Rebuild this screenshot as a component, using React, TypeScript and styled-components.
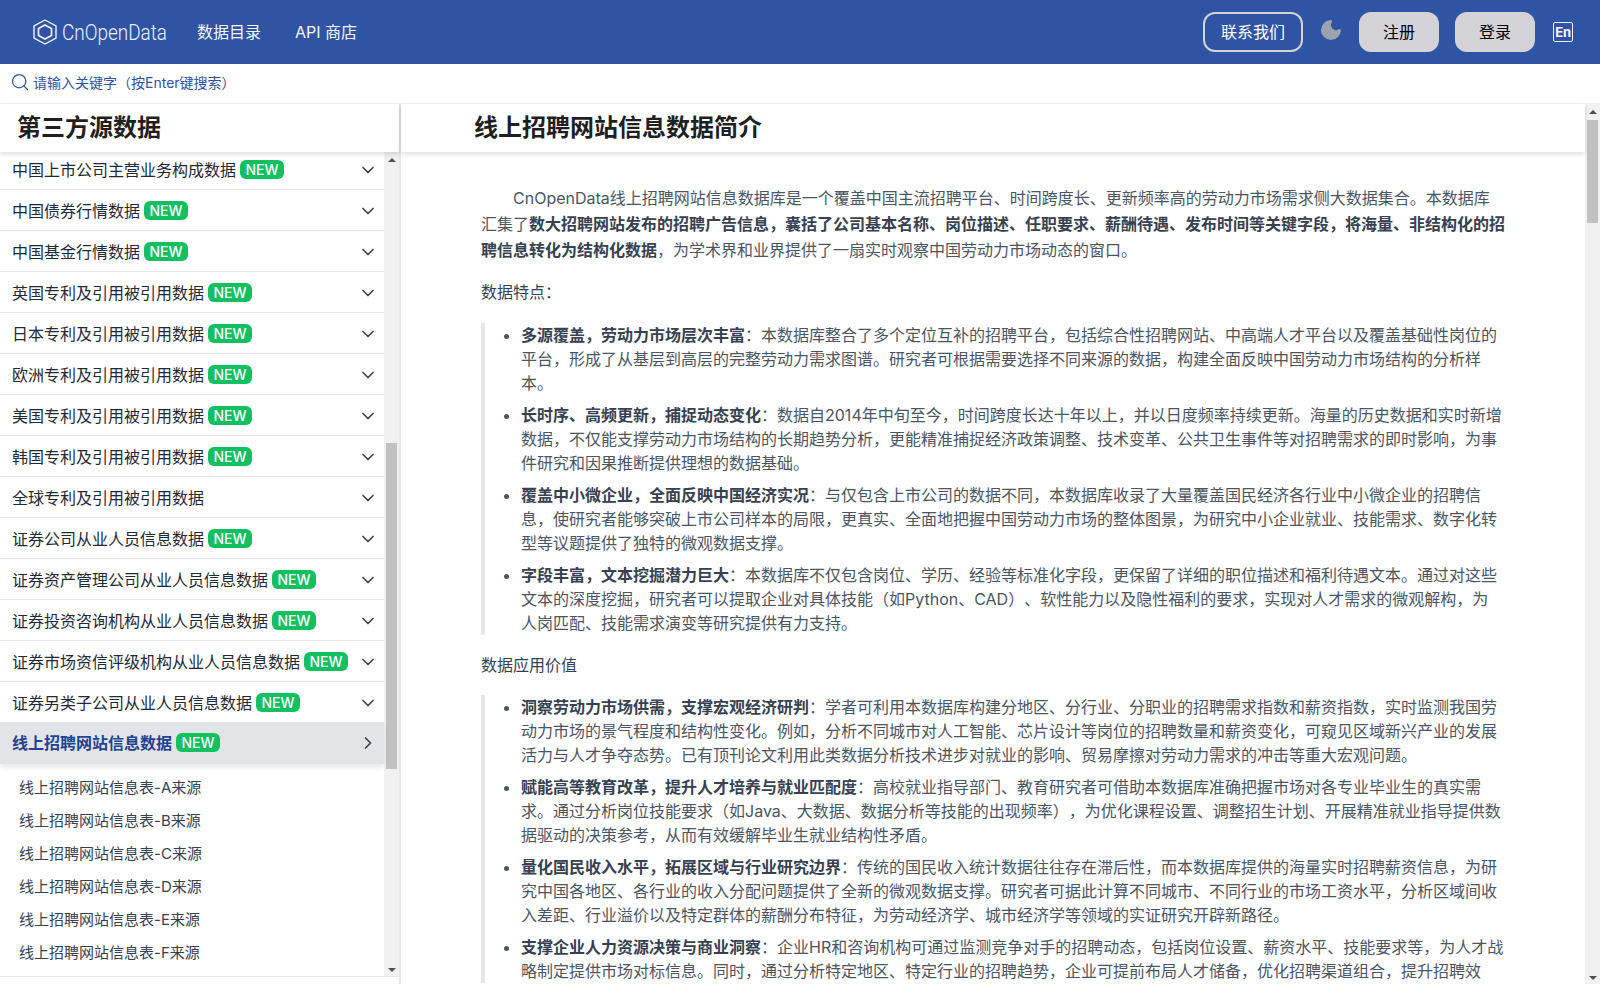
import React from 'react'
import styled, { createGlobalStyle } from 'styled-components'
import { ChevronDown, ChevronRight, Moon, Search } from 'lucide-react'

const GlobalStyle = createGlobalStyle`
  html, body {
    margin: 0;
    padding: 0;
    background: #fff;
    overflow: hidden;
    font-family: Inter, "Noto Sans CJK SC", sans-serif;
    text-spacing-trim: space-all;
  }
  * { box-sizing: border-box; }
`

const Page = styled.div`
  display: flex;
  flex-direction: column;
  height: 984px;
`

const Header = styled.header`
  display: flex;
  align-items: center;
  height: 64px;
  flex: none;
  padding: 0 27px 0 33px;
  background: #2e54a3;
  color: #fff;
`

const Logo = styled.div`
  display: flex;
  align-items: center;
  gap: 5px;
  width: 164px;
  color: #eef1f8;
`

const LogoText = styled.span`
  display: inline-block;
  font-family: Roboto, sans-serif;
  font-size: 22px;
  font-weight: 300;
  white-space: nowrap;
  transform: scaleX(0.86);
  transform-origin: left center;
`

const NavLink = styled.a`
  font-size: 16px;
  margin-right: 34px;
  padding-bottom: 2px;
  color: #f4f6fb;
`

const HeaderRight = styled.div`
  display: flex;
  align-items: center;
  margin-left: auto;
`

const ContactButton = styled.button`
  width: 100px;
  height: 40px;
  padding: 0 0 2px;
  border: 2px solid #d4d4d8;
  border-radius: 12px;
  background: transparent;
  color: #fff;
  font: inherit;
  font-size: 16px;
  margin-right: 16px;
`

const AuthButton = styled.button`
  width: 80px;
  height: 40px;
  padding: 0 0 2px;
  border: 0;
  border-radius: 12px;
  background: #d4d4d8;
  color: #000;
  font: inherit;
  font-size: 16px;
  margin-left: 16px;
`

const MoonIcon = styled(Moon)`
  color: #9ca3af;
  fill: #9ca3af;
  margin-top: -4px;
`

const LangBadge = styled.span`
  display: flex;
  align-items: center;
  justify-content: center;
  width: 20px;
  height: 20px;
  margin-left: 18px;
  border: 1.5px solid #f1f4fa;
  border-radius: 2px;
  font-size: 13px;
  font-weight: 700;
  letter-spacing: -0.2px;
`

const SearchBar = styled.div`
  display: flex;
  align-items: center;
  gap: 3px;
  flex: none;
  height: 40px;
  padding: 0 0 3px 10px;
  font-size: 14px;
  color: #2e54a3;
  border-bottom: 1px solid #f1f1f2;
`

const Main = styled.div`
  display: flex;
  flex: 1;
  min-height: 0;
`

const Sidebar = styled.aside`
  display: flex;
  flex-direction: column;
  flex: none;
  width: 401px;
  border-right: 2px solid #e5e7eb;
`

const TitleBar = styled.div<{ $indent: number }>`
  position: relative;
  z-index: 2;
  flex: none;
  height: 48px;
  padding-left: ${p => p.$indent}px;
  font-size: 24px;
  font-weight: 700;
  line-height: 47px;
  color: #1f1f1f;
  background: #fff;
  box-shadow: 0 2px 5px rgba(0, 0, 0, 0.14);
`

const SidebarBody = styled.div`
  display: flex;
  height: 825px;
  flex: none;
  border-bottom: 1px solid #e5e7eb;
  overflow: hidden;
`

const MenuList = styled.div`
  flex: 1;
  min-width: 0;
  margin-top: -3px;
`

const MenuRow = styled.div<{ $active?: boolean }>`
  position: relative;
  display: flex;
  align-items: center;
  height: 41px;
  padding: 0 6px ${p => (p.$active ? '3px' : '0')} 12px;
  font-size: 16px;
  color: ${p => (p.$active ? '#1e4391' : '#1f2937')};
  font-weight: ${p => (p.$active ? 700 : 400)};
  background: ${p => (p.$active ? '#e3e4e7' : 'transparent')};
  border-bottom: ${p => (p.$active ? '0' : '1px solid #e5e7eb')};
  box-shadow: ${p => (p.$active ? '0 3px 6px rgba(0, 0, 0, 0.1)' : 'none')};
`

const NewBadge = styled.span`
  flex: none;
  width: 44px;
  height: 19px;
  margin-left: 4px;
  border-radius: 6px;
  background: #12c05f;
  color: #fff;
  font-size: 14px;
  font-weight: 500;
  line-height: 19px;
  text-align: center;
`

const RowIcon = styled.span`
  display: flex;
  margin-left: auto;
  margin-top: 2px;
  color: #374151;
`

const SubList = styled.div`
  padding: 7px 0 8px 19px;
`

const SubItem = styled.div`
  height: 33px;
  font-size: 15px;
  line-height: 33px;
  color: #374151;
`

const ScrollTrack = styled.div<{ $width: number }>`
  display: flex;
  flex-direction: column;
  align-items: center;
  justify-content: space-between;
  flex: none;
  width: ${p => p.$width}px;
  background: #f1f1f1;
`

const ArrowUp = styled.span`
  flex: none;
  margin: 6px 0;
  border-left: 4px solid transparent;
  border-right: 4px solid transparent;
  border-bottom: 4px solid #505050;
`

const ArrowDown = styled.span`
  flex: none;
  margin: 6px 0 4px;
  border-left: 4px solid transparent;
  border-right: 4px solid transparent;
  border-top: 4px solid #505050;
`

const ScrollArea = styled.div`
  flex: 1;
  width: 100%;
  display: flex;
  justify-content: center;
`

const ScrollThumb = styled.div<{ $top: number; $height: number }>`
  width: 11px;
  height: ${p => p.$height}px;
  margin-top: ${p => p.$top}px;
  background: #c1c1c1;
`

const ContentPanel = styled.main`
  display: flex;
  flex: 1;
  min-width: 0;
`

const ContentColumn = styled.div`
  display: flex;
  flex-direction: column;
  flex: 1;
  min-width: 0;
`

const Article = styled.article`
  flex: 1;
  min-height: 0;
  overflow: hidden;
  padding: 33px 79px 0 80px;
  font-size: 16px;
  color: #4b5563;
`

const Lead = styled.p`
  margin: 0 0 16px;
  line-height: 26px;
  text-indent: 2em;
  strong { color: #374151; }
`

const Section = styled.p`
  margin: 0 0 17.5px;
  line-height: 26px;
  color: #374151;
`

const Quote = styled.blockquote`
  margin: 0 0 17px;
  padding-left: 16px;
  border-left: 4px solid #e5e7eb;
`

const BulletList = styled.ul`
  margin: 0;
  padding: 0 0 0 20px;
`

const Bullet = styled.li`
  margin-bottom: 8px;
  line-height: 24px;
  white-space: pre-line;
  &:last-child { margin-bottom: 0; }
  strong { color: #374151; }
`

const menu = [
  { name: '中国上市公司主营业务构成数据', isNew: true },
  { name: '中国债券行情数据', isNew: true },
  { name: '中国基金行情数据', isNew: true },
  { name: '英国专利及引用被引用数据', isNew: true },
  { name: '日本专利及引用被引用数据', isNew: true },
  { name: '欧洲专利及引用被引用数据', isNew: true },
  { name: '美国专利及引用被引用数据', isNew: true },
  { name: '韩国专利及引用被引用数据', isNew: true },
  { name: '全球专利及引用被引用数据', isNew: false },
  { name: '证券公司从业人员信息数据', isNew: true },
  { name: '证券资产管理公司从业人员信息数据', isNew: true },
  { name: '证券投资咨询机构从业人员信息数据', isNew: true },
  { name: '证券市场资信评级机构从业人员信息数据', isNew: true },
  { name: '证券另类子公司从业人员信息数据', isNew: true },
]

const subItems = ['A', 'B', 'C', 'D', 'E', 'F']

const features = [
  ['多源覆盖，劳动力市场层次丰富', '：本数据库整合了多个定位互补的招聘平台，包括综合性招聘网站、中高端人才平台以及覆盖基础性岗位的平台，形成了从基层到高层的完整劳动力需求图谱。研究者可根据需要选择不同来源的数据，构建全面反映中国劳动力市场结构的分析样本。'],
  ['长时序、高频更新，捕捉动态变化', '：数据自2014年中旬至今，时间跨度长达十年以上，并以日度频率持续更新。海量的历史数据和实时新增数据，不仅能支撑劳动力市场结构的长期趋势分析，更能精准捕捉经济政策调整、技术变革、公共卫生事件等对招聘需求的即时影响，为事件研究和因果推断提供理想的数据基础。'],
  ['覆盖中小微企业，全面反映中国经济实况', '：与仅包含上市公司的数据不同，本数据库收录了大量覆盖国民经济各行业中小微企业的招聘信息，使研究者能够突破上市公司样本的局限，更真实、全面地把握中国劳动力市场的整体图景，为研究中小企业就业、技能需求、数字化转型等议题提供了独特的微观数据支撑。'],
  ['字段丰富，文本挖掘潜力巨大', '：本数据库不仅包含岗位、学历、经验等标准化字段，更保留了详细的职位描述和福利待遇文本。通过对这些文本的深度挖掘，研究者可以提取企业对具体技能（如Python、CAD）、软性能力以及隐性福利的要求，实现对人才需求的微观解构，为\n人岗匹配、技能需求演变等研究提供有力支持。'],
]

const values = [
  ['洞察劳动力市场供需，支撑宏观经济研判', '：学者可利用本数据库构建分地区、分行业、分职业的招聘需求指数和薪资指数，实时监测我国劳动力市场的景气程度和结构性变化。例如，分析不同城市对人工智能、芯片设计等岗位的招聘数量和薪资变化，可窥见区域新兴产业的发展活力与人才争夺态势。已有顶刊论文利用此类数据分析技术进步对就业的影响、贸易摩擦对劳动力需求的冲击等重大宏观问题。'],
  ['赋能高等教育改革，提升人才培养与就业匹配度', '：高校就业指导部门、教育研究者可借助本数据库准确把握市场对各专业毕业生的真实需求。通过分析岗位技能要求（如Java、大数据、数据分析等技能的出现频率），为优化课程设置、调整招生计划、开展精准就业指导提供数据驱动的决策参考，从而有效缓解毕业生就业结构性矛盾。'],
  ['量化国民收入水平，拓展区域与行业研究边界', '：传统的国民收入统计数据往往存在滞后性，而本数据库提供的海量实时招聘薪资信息，为研究中国各地区、各行业的收入分配问题提供了全新的微观数据支撑。研究者可据此计算不同城市、不同行业的市场工资水平，分析区域间收入差距、行业溢价以及特定群体的薪酬分布特征，为劳动经济学、城市经济学等领域的实证研究开辟新路径。'],
  ['支撑企业人力资源决策与商业洞察', '：企业HR和咨询机构可通过监测竞争对手的招聘动态，包括岗位设置、薪资水平、技能要求等，为人才战略制定提供市场对标信息。同时，通过分析特定地区、特定行业的招聘趋势，企业可提前布局人才储备，优化招聘渠道组合，提升招聘效'],
]

function HexLogo() {
  return (
    <svg width="24" height="26" viewBox="0 0 24 26" fill="none" stroke="#f1f4fa">
      <polygon points="12,1 23,7 23,19 12,25 1,19 1,7" strokeWidth="1.4" />
      <polygon points="12,6 18.5,9.5 18.5,16.5 12,20 5.5,16.5 5.5,9.5" strokeWidth="1.6" />
    </svg>
  )
}

function App() {
  return (
    <Page>
      <GlobalStyle />
      <Header>
        <Logo>
          <HexLogo />
          <LogoText>CnOpenData</LogoText>
        </Logo>
        <NavLink>数据目录</NavLink>
        <NavLink>API 商店</NavLink>
        <HeaderRight>
          <ContactButton>联系我们</ContactButton>
          <MoonIcon size={24} />
          <AuthButton>注册</AuthButton>
          <AuthButton>登录</AuthButton>
          <LangBadge>En</LangBadge>
        </HeaderRight>
      </Header>
      <SearchBar>
        <Search size={20} strokeWidth={1.5} />
        请输入关键字（按Enter键搜索）
      </SearchBar>
      <Main>
        <Sidebar>
          <TitleBar $indent={17}>第三方源数据</TitleBar>
          <SidebarBody>
            <MenuList>
              {menu.map(item => (
                <MenuRow key={item.name}>
                  {item.name}
                  {item.isNew && <NewBadge>NEW</NewBadge>}
                  <RowIcon><ChevronDown size={20} strokeWidth={2} /></RowIcon>
                </MenuRow>
              ))}
              <MenuRow $active>
                线上招聘网站信息数据
                <NewBadge>NEW</NewBadge>
                <RowIcon><ChevronRight size={20} strokeWidth={2} /></RowIcon>
              </MenuRow>
              <SubList>
                {subItems.map(letter => (
                  <SubItem key={letter}>线上招聘网站信息表-{letter}来源</SubItem>
                ))}
              </SubList>
            </MenuList>
            <ScrollTrack $width={15}>
              <ArrowUp />
              <ScrollArea><ScrollThumb $top={275} $height={326} /></ScrollArea>
              <ArrowDown />
            </ScrollTrack>
          </SidebarBody>
        </Sidebar>
        <ContentPanel>
          <ContentColumn>
            <TitleBar $indent={73}>线上招聘网站信息数据简介</TitleBar>
            <Article>
              <Lead>
                CnOpenData线上招聘网站信息数据库是一个覆盖中国主流招聘平台、时间跨度长、更新频率高的劳动力市场需求侧大数据集合。本数据库<br />汇集了
                <strong>数大招聘网站发布的招聘广告信息，囊括了公司基本名称、岗位描述、任职要求、薪酬待遇、发布时间等关键字段，将海量、非结构化的招聘信息转化为结构化数据</strong>
                ，为学术界和业界提供了一扇实时观察中国劳动力市场动态的窗口。
              </Lead>
              <Section>数据特点：</Section>
              <Quote>
                <BulletList>
                  {features.map(([title, body]) => (
                    <Bullet key={title}><strong>{title}</strong>{body}</Bullet>
                  ))}
                </BulletList>
              </Quote>
              <Section>数据应用价值</Section>
              <Quote>
                <BulletList>
                  {values.map(([title, body]) => (
                    <Bullet key={title}><strong>{title}</strong>{body}</Bullet>
                  ))}
                </BulletList>
              </Quote>
            </Article>
          </ContentColumn>
          <ScrollTrack $width={15}>
            <ArrowUp />
            <ScrollArea><ScrollThumb $top={0} $height={103} /></ScrollArea>
            <ArrowDown />
          </ScrollTrack>
        </ContentPanel>
      </Main>
    </Page>
  )
}

export default App
